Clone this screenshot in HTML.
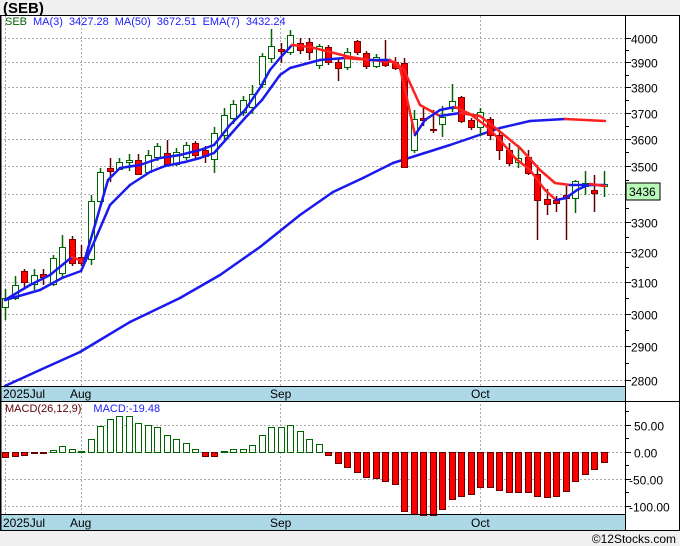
<!DOCTYPE html>
<html><head><meta charset="utf-8"><style>
html,body{margin:0;padding:0;background:#f0f0f0;}
body{width:680px;height:546px;overflow:hidden;position:relative;font-family:"Liberation Sans",sans-serif;}
svg{position:absolute;left:0;top:0;}
</style></head><body>
<svg id="s" width="680" height="546" xmlns="http://www.w3.org/2000/svg" font-family="Liberation Sans, sans-serif">
<rect x="0" y="0" width="680" height="546" fill="#f0f0f0"/>
<rect x="0" y="15" width="680" height="516" fill="#fff"/>
<text x="3" y="13" font-size="15" font-weight="bold" fill="#000">(SEB)</text>
<g id="grid"></g>
<rect x="0" y="387" width="625" height="14" fill="#add8e6"/>
<rect x="0" y="515" width="625" height="15" fill="#add8e6"/>
<g id="plot"></g>
<line x1="0" y1="15.5" x2="680" y2="15.5" stroke="#000"/>
<line x1="0" y1="386.5" x2="625" y2="386.5" stroke="#000"/>
<line x1="0" y1="401.5" x2="680" y2="401.5" stroke="#000"/>
<line x1="0" y1="514.5" x2="625" y2="514.5" stroke="#000"/>
<line x1="0" y1="530.5" x2="680" y2="530.5" stroke="#000"/>
<line x1="625.5" y1="15" x2="625.5" y2="531" stroke="#000"/>
<line x1="0.5" y1="15" x2="0.5" y2="531" stroke="#000" stroke-width="2"/>
<line x1="679.5" y1="15" x2="679.5" y2="531" stroke="#000"/>
<g font-size="12" fill="#000">
<text x="3" y="398">2025Jul</text><text x="70" y="398">Aug</text><text x="270" y="398">Sep</text><text x="471" y="398">Oct</text>
<text x="3" y="527">2025Jul</text><text x="70" y="527">Aug</text><text x="270" y="527">Sep</text><text x="471" y="527">Oct</text>
</g>
<text x="5" y="25" font-size="11"><tspan fill="#006400">SEB</tspan><tspan fill="#2020ff" dx="6">MA(3)</tspan><tspan fill="#2020ff" dx="6">3427.28</tspan><tspan fill="#2020ff" dx="6">MA(50)</tspan><tspan fill="#2020ff" dx="6">3672.51</tspan><tspan fill="#2020ff" dx="6">EMA(7)</tspan><tspan fill="#2020ff" dx="6">3432.24</tspan></text>
<text x="5" y="412" font-size="11"><tspan fill="#600000">MACD(26,12,9)</tspan><tspan fill="#2020ff" dx="12">MACD:-19.48</tspan></text>
<g id="axis" font-size="12" fill="#000"></g>
<rect x="626" y="183" width="34" height="17" fill="#b8f8b8" stroke="#000"/>
<text x="629" y="196" font-size="12">3436</text>
<text x="676" y="543" font-size="12" text-anchor="end" fill="#000">©12Stocks.com</text>
</svg>
<script>
var NS="http://www.w3.org/2000/svg";
function el(p,t,a){var e=document.createElementNS(NS,t);for(var k in a)e.setAttribute(k,a[k]);p.appendChild(e);return e;}
var g=document.getElementById('grid'),pl=document.getElementById('plot'),ax=document.getElementById('axis');
function py(p){return 38+958.8*(Math.log(4000)-Math.log(p));}
for(var p=2800;p<=4000;p+=100){var y=Math.round(py(p))+0.5;el(g,'line',{x1:0,y1:y,x2:625,y2:y,stroke:'#aaa','stroke-dasharray':'2,2'});
el(ax,'line',{x1:625,y1:y,x2:631,y2:y,stroke:'#000'});var t=el(ax,'text',{x:631,y:y+5});t.textContent=p;
var y2=Math.round(py(p+50))+0.5;if(p<4000)el(ax,'line',{x1:625,y1:y2,x2:629,y2:y2,stroke:'#000'});}
var mv=[[50,425],[0,452],[-50,479],[-100,506]];
mv.forEach(function(m){var y=m[1]+0.5;el(g,'line',{x1:0,y1:y,x2:625,y2:y,stroke:'#aaa','stroke-dasharray':'2,2'});el(ax,'line',{x1:625,y1:y,x2:631,y2:y,stroke:'#000'});var t=el(ax,'text',{x:m[0]<0?629:634,y:y+5});t.textContent=m[0].toFixed(2);});
[411,438,465,492].forEach(function(y){el(ax,'line',{x1:625,y1:y+.5,x2:629,y2:y+.5,stroke:'#000'});});
[5.5,81.5,280.5,480.5].forEach(function(x){el(g,'line',{x1:x,y1:16,x2:x,y2:531,stroke:'#aaa','stroke-dasharray':'2,2'});});
var C=[[298,307,289,320,1],[285,298,276,300,1],[271,282,269,287,0],[275,284,269,290,1],[274,277,269,285,0],[258,284,255,286,1],[247,273,235,278,1],[239,263,236,266,0],[257,263,245,266,0],[201,259,195,265,1],
[172,201,168,203,1],[168,171,158,182,0],[162,169,158,170,1],[160,162,154,171,1],[160,174,154,175,0],[155,172,150,174,1],[146,157,143,161,1],[153,164,140,166,0],[152,164,148,166,1],[145,157,142,160,1],
[143,155,141,158,0],[150,156,146,163,0],[133,159,127,173,1],[115,135,108,140,1],[104,118,100,124,1],[100,112,96,116,1],[94,107,85,114,1],[56,84,53,88,1],[46,58,29,63,1],[49,51,43,63,0],
[35,52,30,55,1],[43,50,38,54,0],[42,52,38,60,0],[46,65,44,69,1],[47,62,45,65,0],[62,68,58,81,0],[52,67,48,70,1],[41,52,40,55,0],[53,66,51,69,0],[57,66,54,68,1],
[59,65,40,67,0],[62,68,57,70,0],[63,167,58,168,0],[119,150,110,153,1],[118,120,108,126,0],[129,130,110,133,0],[117,124,106,137,1],[101,108,84,112,1],[97,121,96,123,0],[120,127,118,130,0],
[112,127,108,136,1],[119,135,117,140,0],[135,150,130,160,0],[150,163,143,166,0],[158,162,145,168,1],[157,173,150,175,0],[174,200,165,240,0],[199,204,189,215,0],[200,203,196,212,0],[195,198,186,240,0],
[181,198,180,213,1],[183,186,171,195,1],[190,193,175,212,0],[184,186,171,197,1]];
var M=[457,456,455,453,453,450,446,449,451,439,426,419,416,416,423,425,427,435,439,443,449,456,456,451,449,449,445,435,427,427,425,431,439,444,455,463,467,472,477,478,481,484,511,514,515,515,509,499,496,494,487,487,490,492,492,492,496,497,496,491,481,474,469,462];
function X(i){return 5+9.5*i;}
M.forEach(function(y,i){var x=Math.round(X(i))-3;var red=y>452;
if(red)el(pl,'rect',{x:x+.5,y:452.5,width:6,height:Math.max(1,y-452),fill:'#f00',stroke:'#600'});
else el(pl,'rect',{x:x+.5,y:y+.5,width:6,height:Math.max(1,452-y),fill:'#fff',stroke:'#006400'});});
function line(pts){for(var i=0;i<pts.length-1;i++){var a=pts[i],b=pts[i+1];var c=(b[1]>a[1]+0.3)?'#ff2020':'#1a1aee';
el(pl,'line',{x1:a[0],y1:a[1],x2:b[0],y2:b[1],stroke:c,'stroke-width':2.5,'stroke-linecap':'round'});}}
var MA50=[[5,386],[40,370],[80,352],[100,340],[130,322],[180,298],[220,275],[260,247],[300,215],[333,192],[363,178],[393,163],[450,145],[500,128],[530,121],[565,119],[605,121]];
line(MA50);
C.forEach(function(c,i){var x=Math.round(X(i));var col=c[4]?'#006400':'#600000';
el(pl,'line',{x1:x+.5,y1:c[2],x2:x+.5,y2:c[3],stroke:col,'stroke-width':1.5});
el(pl,'rect',{x:x-2.5,y:c[0]+.5,width:6,height:Math.max(1,c[1]-c[0]),fill:c[4]?'#fff':'#f00',stroke:c[4]?'#006400':'#800000'});});
var EMA=[[5,300],[40,290],[62,278],[81,271],[95,240],[110,205],[130,185],[150,172],[165,166],[185,162],[200,158],[214,153],[230,135],[245,118],[262,100],[280,75],[290,68],[320,60],[345,58],[370,60],[395,62],[404,70],[420,105],[440,116],[460,113],[480,116],[498,130],[520,148],[540,170],[555,183],[570,185],[590,185],[605,185]];
var MA3=[[5,300],[30,285],[50,275],[72,257],[84,262],[95,225],[108,180],[120,168],[140,165],[160,158],[180,155],[200,150],[214,145],[230,125],[245,110],[260,88],[270,70],[280,58],[292,45],[310,47],[330,52],[350,57],[370,60],[390,60],[400,68],[405,90],[415,135],[425,120],[440,110],[455,107],[470,114],[485,125],[500,140],[515,158],[530,170],[545,190],[556,200],[566,198],[577,190],[590,184],[605,186]];
line(EMA);line(MA3);
</script>
</body></html>
